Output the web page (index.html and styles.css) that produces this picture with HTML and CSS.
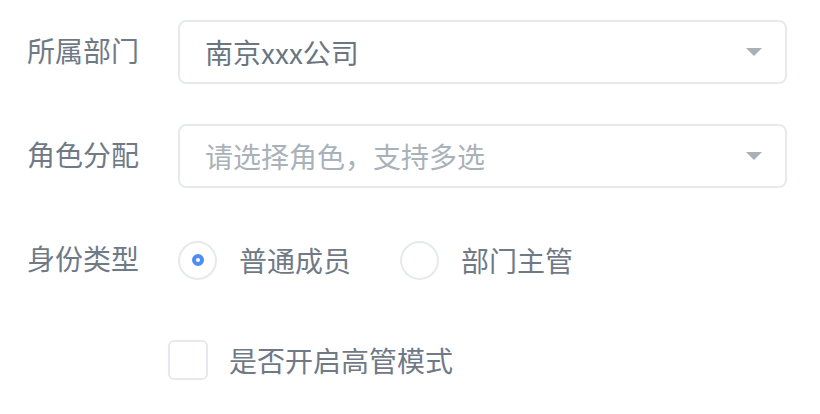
FILE: index.html
```html
<!DOCTYPE html>
<html>
	<head>
		<meta charset="UTF-8">
		<title>成员信息</title>
		<link rel="stylesheet" href="styles.css">
	</head>
	<body>
		<div class="form">
			<div class="form-row">
				<div class="form-label">所属部门</div>
				<div class="select">
					<span class="select-value">南京xxx公司</span>
					<i class="select-arrow"></i>
				</div>
			</div>
			<div class="form-row">
				<div class="form-label">角色分配</div>
				<div class="select">
					<span class="select-placeholder">请选择角色，支持多选</span>
					<i class="select-arrow"></i>
				</div>
			</div>
			<div class="form-row">
				<div class="form-label">身份类型</div>
				<div class="radio-group">
					<label class="radio checked"><span class="radio-circle"><span class="radio-dot"></span></span>普通成员</label>
					<label class="radio"><span class="radio-circle"></span>部门主管</label>
				</div>
			</div>
			<div class="form-row">
				<label class="checkbox"><span class="checkbox-box"></span>是否开启高管模式</label>
			</div>
		</div>
	</body>
</html>
```

FILE: styles.css
```css
body{
	margin: 0;
	background: #FFFFFF;
	font-family: "Noto Sans CJK SC", "Noto Sans", sans-serif;
	color: #6f7a86;
}
.form{
	padding: 20px 33px 0 27px;
}
.form-row{
	display: flex;
	align-items: center;
	height: 64px;
	margin-bottom: 40px;
}
.form-row:nth-child(3){
	margin-bottom: 36px;
}
.form-row:last-child{
	margin-bottom: 0;
}
.form-label{
	width: 151px;
	font-size: 28px;
	line-height: 1;
	margin-top: -4px;
	flex-shrink: 0;
}
.select{
	flex: 1;
	height: 64px;
	box-sizing: border-box;
	border: 2px solid #e6e9ed;
	border-radius: 8px;
	display: flex;
	align-items: center;
	padding: 0 23px 0 25px;
	font-size: 28px;
}
.select-value{
	flex: 1;
	color: #6b7580;
}
.select-placeholder{
	flex: 1;
	color: #a9b1b9;
}
.select-arrow{
	width: 0;
	height: 0;
	border-left: 8px solid transparent;
	border-right: 8px solid transparent;
	border-top: 8px solid #a9b0b7;
}
.radio-group{
	display: flex;
	align-items: center;
}
.radio{
	display: flex;
	align-items: center;
	font-size: 28px;
	margin-right: 49px;
}
.radio-circle{
	width: 39px;
	height: 39px;
	box-sizing: border-box;
	border: 2px solid #e6e9ed;
	border-radius: 50%;
	margin-right: 22px;
	display: flex;
	align-items: center;
	justify-content: center;
}
.radio-dot{
	width: 4px;
	height: 4px;
	border: 4px solid #4c8df5;
	border-radius: 50%;
	background: #FFFFFF;
}
.checkbox{
	display: flex;
	align-items: center;
	font-size: 28px;
	margin-left: 141px;
}
.checkbox-box{
	width: 40px;
	height: 40px;
	box-sizing: border-box;
	border: 2px solid #e6e9ed;
	border-radius: 6px;
	margin-right: 21px;
}
```
